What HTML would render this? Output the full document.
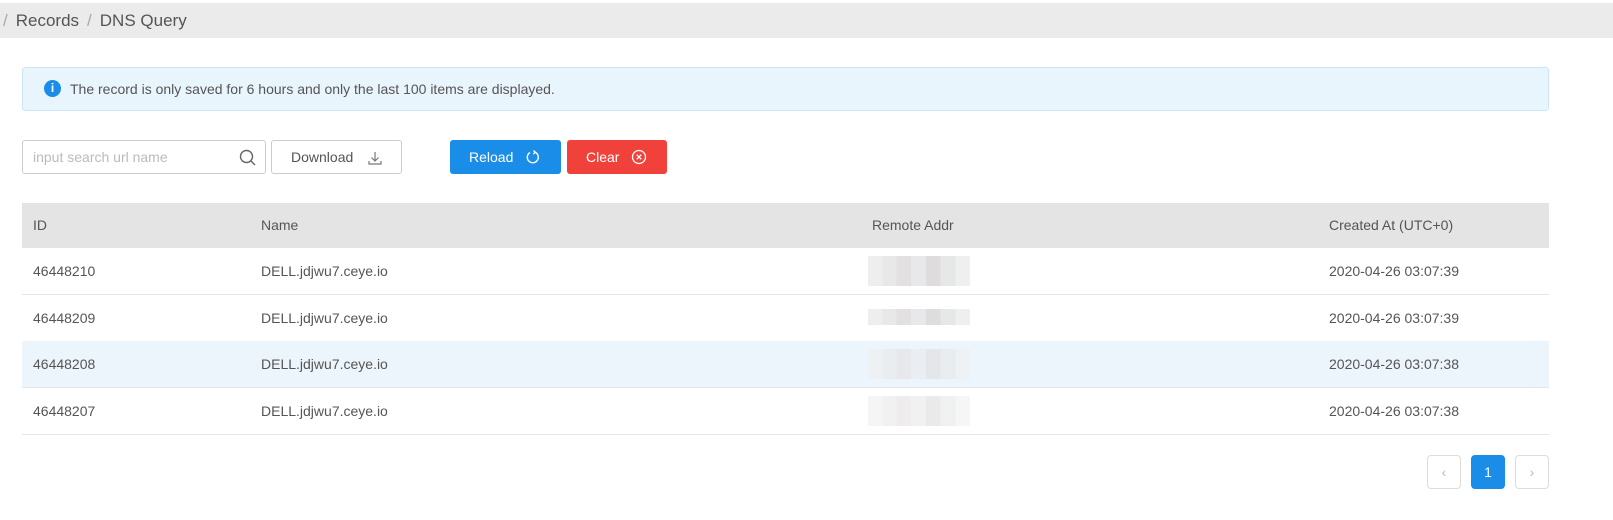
<!DOCTYPE html>
<html><head><style>
*{box-sizing:border-box;margin:0;padding:0}
body{width:1613px;height:520px;background:#fff;font-family:"Liberation Sans",sans-serif;color:#555;position:relative;overflow:hidden}
.a{position:absolute}
.bc{left:0;top:3px;width:1613px;height:35px;background:#ebebeb;font-size:17px;line-height:35px;color:#555}
.bc span.s{color:#aaa;margin:0 8px}
.alert{left:22px;top:67px;width:1527px;height:44px;background:#e9f5fc;border:1px solid #cde6f6;border-radius:3px;font-size:14px;line-height:42px;color:#555;padding-left:47px}
.ic{left:21px;top:12px;width:17px;height:17px;border-radius:50%;background:#1a8de8;color:#fff;font-size:12px;line-height:17px;text-align:center;font-weight:bold}
.btn{top:140px;height:34px;border-radius:3px;font-size:14px;line-height:32px;text-align:center}
.th{left:22px;top:203px;width:1527px;height:45px;background:#e4e4e4}
.row{left:22px;width:1527px;height:47px;border-bottom:1px solid #e6e6e6}
.c{position:absolute;font-size:14px;color:#555;top:0;line-height:46px}
.blur{position:absolute;left:846px;width:102px;height:30px;top:8px;background:linear-gradient(90deg,#eee 0 14%,#e8e8e8 14% 28%,#e2e0e0 28% 42%,#e8e8ea 42% 57%,#dedcdd 57% 71%,#e6e7e7 71% 86%,#efefef 86%)}
.pg{top:455px;width:34px;height:34px;border:1px solid #ddd;border-radius:4px;text-align:center;line-height:32px;color:#bbb;font-size:14px}
</style></head><body>
<div class="a bc"><span class="s" style="margin-left:3px">/</span>Records<span class="s">/</span>DNS Query</div>
<div class="a alert"><div class="a ic">i</div>The record is only saved for 6 hours and only the last 100 items are displayed.</div>
<div class="a btn" style="left:22px;width:244px;border:1px solid #ccc;text-align:left;padding-left:10px;color:#bbb">input search url name
<svg class="a" style="right:8px;top:8px" width="18" height="18" viewBox="0 0 18 18"><circle cx="7.5" cy="7.5" r="6" fill="none" stroke="#666" stroke-width="1.4"/><line x1="12" y1="12" x2="16" y2="16" stroke="#666" stroke-width="1.4"/></svg></div>
<div class="a btn" style="left:271px;width:131px;border:1px solid #ccc;color:#555;text-align:left;padding-left:19px">Download
<svg class="a" style="left:95px;top:9px" width="16" height="16" viewBox="0 0 16 16" fill="none" stroke="#777" stroke-width="1.2"><path d="M8 2v9M4.5 7.5 8 11l3.5-3.5M2 11v3h12v-3"/></svg></div>
<div class="a btn" style="left:450px;width:111px;background:#1a8de8;color:#fff;text-align:left;padding-left:19px;line-height:35px">Reload
<svg class="a" style="left:75px;top:9px" width="16" height="16" viewBox="0 0 16 16" fill="none" stroke="#fff" stroke-width="1.4"><path d="M10 3.2A5.5 5.5 0 1 1 5 3.5"/><path d="M8.5 1.5 10.3 3.3 8.3 5"/></svg></div>
<div class="a btn" style="left:567px;width:100px;background:#f0413a;color:#fff;text-align:left;padding-left:19px;line-height:35px">Clear
<svg class="a" style="left:64px;top:9px" width="16" height="16" viewBox="0 0 16 16" fill="none" stroke="#fff" stroke-width="1.3"><circle cx="8" cy="8" r="6.5"/><path d="M5.7 5.7l4.6 4.6M10.3 5.7l-4.6 4.6"/></svg></div>
<div class="a th"><div class="c" style="left:11px;line-height:45px">ID</div><div class="c" style="left:239px;line-height:45px">Name</div><div class="c" style="left:850px;line-height:45px">Remote Addr</div><div class="c" style="left:1307px;line-height:45px">Created At (UTC+0)</div></div>
<div class="a row" style="top:248px"><div class="c" style="left:11px">46448210</div><div class="c" style="left:239px">DELL.jdjwu7.ceye.io</div><div class="blur"></div><div class="c" style="left:1307px">2020-04-26 03:07:39</div></div>
<div class="a row" style="top:295px"><div class="c" style="left:11px">46448209</div><div class="c" style="left:239px">DELL.jdjwu7.ceye.io</div><div class="blur" style="top:14px;height:16px"></div><div class="c" style="left:1307px">2020-04-26 03:07:39</div></div>
<div class="a row" style="top:341px;background:#ecf5fc"><div class="c" style="left:11px">46448208</div><div class="c" style="left:239px">DELL.jdjwu7.ceye.io</div><div class="blur" style="opacity:.6"></div><div class="c" style="left:1307px">2020-04-26 03:07:38</div></div>
<div class="a row" style="top:388px"><div class="c" style="left:11px">46448207</div><div class="c" style="left:239px">DELL.jdjwu7.ceye.io</div><div class="blur" style="opacity:.6"></div><div class="c" style="left:1307px">2020-04-26 03:07:38</div></div>
<div class="a pg" style="left:1427px">&lsaquo;</div>
<div class="a pg" style="left:1471px;background:#1a8de8;border-color:#1a8de8;color:#fff">1</div>
<div class="a pg" style="left:1515px">&rsaquo;</div>
</body></html>
